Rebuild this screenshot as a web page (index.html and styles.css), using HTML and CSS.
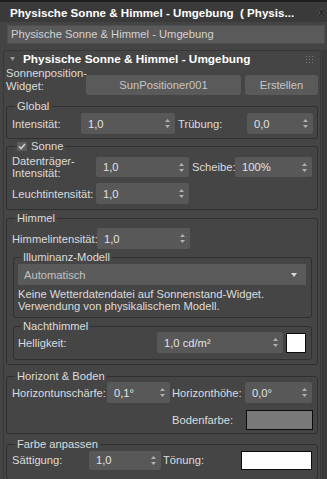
FILE: index.html
```html
<!DOCTYPE html>
<html lang="de">
<head>
    <meta charset="UTF-8"/>
    <title>Physische Sonne &amp; Himmel - Umgebung</title>
    <link rel="stylesheet" href="styles.css">
</head>
<body>
<!-- Titelleiste -->
<div class="titlebar">
    <span class="title">Physische Sonne &amp; Himmel - Umgebung  ( Physis...</span>
    <span class="close">x</span>
</div>
<div class="namefield">Physische Sonne &amp; Himmel - Umgebung</div>

<div class="main">
    <div class="rollout">
        <div class="rollout-head">
            <svg class="tri" width="5" height="4" viewBox="0 0 5 4"><path d="M0 0H5L2.5 4Z" fill="#9a9a9a"/></svg>
            <span class="rollout-title">Physische Sonne &amp; Himmel - Umgebung</span>
            <svg class="grip" width="7" height="7" viewBox="0 0 7 7" fill="#7a7a7a">
                <rect x="0" y="0" width="1" height="1"/><rect x="3" y="0" width="1" height="1"/><rect x="6" y="0" width="1" height="1"/>
                <rect x="0" y="3" width="1" height="1"/><rect x="3" y="3" width="1" height="1"/><rect x="6" y="3" width="1" height="1"/>
                <rect x="0" y="6" width="1" height="1"/><rect x="3" y="6" width="1" height="1"/><rect x="6" y="6" width="1" height="1"/>
            </svg>
        </div>

        <div class="widget-row">
            <div class="widget-label">Sonnenposition-<br>Widget:</div>
            <div class="btn btn-sun">SunPositioner001</div>
            <div class="btn btn-create">Erstellen</div>
        </div>

        <!-- Global -->
        <fieldset class="group group-global">
            <legend>Global</legend>
            <div class="row">
                <span class="lbl w-69">Intensität:</span>
                <div class="spin w-94"><span>1,0</span><svg class="arrows" width="5" height="9" viewBox="0 0 5 9"><path d="M2.5 0L5 3H0Z M0 6H5L2.5 9Z"/></svg></div>
                <span class="lbl lbl-gap w-69">Trübung:</span>
                <div class="spin w-66"><span>0,0</span><svg class="arrows" width="5" height="9" viewBox="0 0 5 9"><path d="M2.5 0L5 3H0Z M0 6H5L2.5 9Z"/></svg></div>
            </div>
        </fieldset>

        <!-- Sonne -->
        <fieldset class="group group-sun">
            <legend><span class="check"><svg width="8" height="7" viewBox="0 0 8 7"><path d="M1 3.5L3 5.5L7 1" stroke="#cfcfcf" stroke-width="1.6" fill="none"/></svg></span>Sonne</legend>
            <div class="row row-tall">
                <span class="lbl lbl-two w-84">Datenträger-<br>Intensität:</span>
                <div class="spin w-93"><span>1,0</span><svg class="arrows" width="5" height="9" viewBox="0 0 5 9"><path d="M2.5 0L5 3H0Z M0 6H5L2.5 9Z"/></svg></div>
                <span class="lbl lbl-gap w-43">Scheibe:</span>
                <div class="spin w-77"><span>100%</span><svg class="arrows" width="5" height="9" viewBox="0 0 5 9"><path d="M2.5 0L5 3H0Z M0 6H5L2.5 9Z"/></svg></div>
            </div>
            <div class="row row-next">
                <span class="lbl w-84">Leuchtintensität:</span>
                <div class="spin w-93"><span>1,0</span><svg class="arrows" width="5" height="9" viewBox="0 0 5 9"><path d="M2.5 0L5 3H0Z M0 6H5L2.5 9Z"/></svg></div>
            </div>
        </fieldset>

        <!-- Himmel -->
        <fieldset class="group group-sky">
            <legend>Himmel</legend>
            <div class="row">
                <span class="lbl w-85">Himmelintensität:</span>
                <div class="spin w-93"><span>1,0</span><svg class="arrows" width="5" height="9" viewBox="0 0 5 9"><path d="M2.5 0L5 3H0Z M0 6H5L2.5 9Z"/></svg></div>
            </div>

            <fieldset class="group sub sub-model">
                <legend>Illuminanz-Modell</legend>
                <div class="dropdown">
                    <span>Automatisch</span>
                    <svg width="6" height="4" viewBox="0 0 6 4"><path d="M0 0H6L3 4Z" fill="#d8d8d8"/></svg>
                </div>
                <p class="note">Keine Wetterdatendatei auf Sonnenstand-Widget.<br>Verwendung von physikalischem Modell.</p>
            </fieldset>

            <fieldset class="group sub sub-night">
                <legend>Nachthimmel</legend>
                <div class="row">
                    <span class="lbl w-139">Helligkeit:</span>
                    <div class="spin w-126"><span>1,0 cd/m²</span><svg class="arrows" width="5" height="9" viewBox="0 0 5 9"><path d="M2.5 0L5 3H0Z M0 6H5L2.5 9Z"/></svg></div>
                    <div class="swatch swatch-white swatch-small"></div>
                </div>
            </fieldset>
        </fieldset>

        <!-- Horizont & Boden -->
        <fieldset class="group group-horizon">
            <legend>Horizont &amp; Boden</legend>
            <div class="row">
                <span class="lbl w-95">Horizontunschärfe:</span>
                <div class="spin w-63"><span>0,1°</span><svg class="arrows" width="5" height="9" viewBox="0 0 5 9"><path d="M2.5 0L5 3H0Z M0 6H5L2.5 9Z"/></svg></div>
                <span class="lbl lbl-gap2 w-73">Horizonthöhe:</span>
                <div class="spin w-67"><span>0,0°</span><svg class="arrows" width="5" height="9" viewBox="0 0 5 9"><path d="M2.5 0L5 3H0Z M0 6H5L2.5 9Z"/></svg></div>
            </div>
            <div class="row row-ground">
                <span class="lbl">Bodenfarbe:</span>
                <div class="swatch swatch-grey w-67"></div>
            </div>
        </fieldset>

        <!-- Farbe anpassen -->
        <fieldset class="group group-color">
            <legend>Farbe anpassen</legend>
            <div class="row row-short">
                <span class="lbl w-77">Sättigung:</span>
                <div class="spin w-72"><span>1,0</span><svg class="arrows" width="5" height="9" viewBox="0 0 5 9"><path d="M2.5 0L5 3H0Z M0 6H5L2.5 9Z"/></svg></div>
                <span class="lbl lbl-gap2 w-78">Tönung:</span>
                <div class="swatch swatch-white w-71"></div>
            </div>
        </fieldset>
    </div>
    <div class="scrollbar"></div>
</div>
</body>
</html>
```

FILE: styles.css
```css
* {
    box-sizing: border-box;
}

body {
    margin: 0;
    width: 327px;
    height: 479px;
    overflow: hidden;
    background: #444444;
    font-family: "Liberation Sans", Arial, sans-serif;
    font-size: 11.2px;
    color: #dcdcdc;
}

/* Titelleiste */
.titlebar {
    height: 22px;
    background: #3a3a3a;
    border-top: 2px solid #1f1f1f;
    display: flex;
    align-items: center;
    padding: 0 2px 0 10px;
}

.title {
    font-weight: bold;
    font-size: 11.6px;
    color: #ffffff;
    white-space: pre;
}

.close {
    margin-left: auto;
    font-weight: bold;
    font-size: 12px;
    color: #202020;
    text-shadow: 0 0 1px #9a9a9a;
}

.namefield {
    margin: 3px 2px 0 7px;
    height: 19px;
    line-height: 17px;
    padding-left: 3px;
    background: #5a5a5a;
    border: 1px solid #4e4e4e;
    color: #d2d2d2;
}

.main {
    display: flex;
    margin-top: 6px;
}

.rollout {
    margin-left: 3px;
    width: 318px;
    height: 440px;
    background: #454545;
    border: 1px solid #383838;
    border-bottom: none;
    border-radius: 3px 3px 0 0;
    padding: 0 2px;
}

.scrollbar {
    margin-left: 1px;
    width: 5px;
    height: 440px;
    background: #3b3b3b;
    border-left: 1px solid #363636;
}

.rollout-head {
    height: 16px;
    display: flex;
    align-items: center;
    padding-left: 4px;
}

.rollout-title {
    font-weight: bold;
    font-size: 11.8px;
    color: #ffffff;
    margin-left: 8px;
    flex: 1;
}

.grip {
    margin-right: 5px;
}

/* Widget-Zeile */
.widget-row {
    display: flex;
    align-items: flex-end;
    height: 28px;
}

.widget-label {
    width: 80px;
    line-height: 13px;
    align-self: flex-start;
}

.btn {
    height: 20px;
    line-height: 20px;
    background: #5a5a5a;
    border-radius: 3px;
    text-align: center;
    color: #c6c6c6;
}

.btn-sun {
    width: 155px;
}

.btn-create {
    width: 73px;
    margin-left: 4px;
}

/* Gruppen */
.group {
    margin: 5px 0 0;
    border: 1px solid #303030;
    border-radius: 3px;
    padding: 2px 4px 4px 5px;
    min-width: 0;
}

.group legend {
    padding: 0 2px;
    margin-left: 3px;
    line-height: 12px;
    display: flex;
    align-items: center;
}

.group-global {
    padding-top: 1px;
}

.group-sun {
    margin-top: 1px;
    padding-top: 3px;
    padding-bottom: 5px;
}

.group-sky {
    margin-top: 2px;
    padding-top: 4px;
    padding-bottom: 4px;
}

.group-horizon {
    margin-top: 5px;
    padding-top: 0;
    padding-bottom: 3px;
}

.group-color {
    margin-top: 4px;
    padding-top: 0;
    padding-bottom: 9px;
}

.sub {
    margin: 2px 1px 0 1px;
    padding: 1px 5px 3px 4px;
}

.sub-model {
    padding-bottom: 5px;
}

.sub-night {
    padding-top: 0;
    padding-bottom: 6px;
}

.check {
    width: 10px;
    height: 9px;
    background: #5e5e5e;
    margin-right: 4px;
    display: flex;
    align-items: center;
    justify-content: center;
}

/* Zeilen */
.row {
    display: flex;
    align-items: center;
    height: 21px;
}

.row-tall {
    height: 24px;
}

.row-next {
    margin-top: 4px;
}

.row-short {
    height: 20px;
}

.row-ground {
    margin-top: 7px;
    height: 20px;
    justify-content: flex-end;
}

.row-ground .lbl {
    margin-right: 13px;
}

.lbl {
    white-space: nowrap;
}

.lbl-two {
    line-height: 12px;
}

.lbl-gap {
    margin-left: 3px;
}

.lbl-gap2 {
    margin-left: 2px;
}

.spin {
    height: 21px;
    background: #585858;
    border-radius: 2px;
    display: flex;
    align-items: center;
    justify-content: space-between;
    padding: 0 5px 0 7px;
    color: #e2e2e2;
}

.row-tall .spin {
    height: 20px;
}

.row-short .spin {
    height: 19px;
}

.arrows {
    fill: #b0b0b0;
}

.dropdown {
    height: 21px;
    background: #5a5a5a;
    display: flex;
    align-items: center;
    justify-content: space-between;
    padding: 0 9px 0 6px;
    color: #c2c2c2;
}

.note {
    margin: 4px 0 0;
    line-height: 11.5px;
}

.swatch {
    height: 20px;
    border: 1px solid #0c0c0c;
}

.swatch-small {
    width: 20px;
    margin-left: 3px;
}

.swatch-white {
    background: #ffffff;
}

.swatch-grey {
    background: #787878;
}

.row-short .swatch {
    height: 19px;
}

.w-43 { width: 43px; }
.w-63 { width: 63px; }
.w-66 { width: 66px; }
.w-67 { width: 67px; }
.w-69 { width: 69px; }
.w-71 { width: 71px; }
.w-72 { width: 72px; }
.w-73 { width: 73px; }
.w-77 { width: 77px; }
.w-78 { width: 78px; }
.w-84 { width: 84px; }
.w-85 { width: 85px; }
.w-93 { width: 93px; }
.w-94 { width: 94px; }
.w-95 { width: 95px; }
.w-126 { width: 126px; }
.w-139 { width: 139px; }
```
